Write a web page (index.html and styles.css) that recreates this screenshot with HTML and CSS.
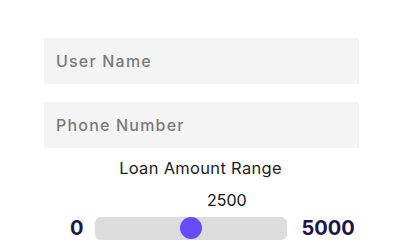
FILE: index.html
```html
<!DOCTYPE html>
<html>
<head>
<meta charset="utf-8">
<link rel="stylesheet" href="styles.css">
</head>
<body>
<form class="form">
  <input class="field" type="text" placeholder="User Name">
  <input class="field" type="text" placeholder="Phone Number">
  <div class="range-block">
    <div class="range-title">Loan Amount Range</div>
    <div class="range-value">2500</div>
    <div class="range-row">
      <span class="range-num">0</span>
      <input class="slider" type="range" min="0" max="5000" value="2500">
      <span class="range-num">5000</span>
    </div>
  </div>
</form>
</body>
</html>
```
FILE: styles.css
```css
* { box-sizing: border-box; }
html, body { margin: 0; padding: 0; background: #ffffff; }
body { font-family: "Inter", "Noto Sans", sans-serif; }
.form {
  width: 315px;
  margin: 0 0 0 44px;
  padding-top: 38px;
  display: flex;
  flex-direction: column;
}
.field {
  display: block;
  width: 315px;
  height: 46px;
  border: none;
  outline: none;
  background: #f4f4f4;
  padding: 0 12px;
  font-family: inherit;
  font-size: 16px;
  font-weight: 500;
  letter-spacing: 1.2px;
  color: #333;
  margin-bottom: 18px;
}
.field::placeholder { color: #7a7a7a; }
.field:last-of-type { margin-bottom: 0; }
.range-block {
  display: flex;
  flex-direction: column;
  margin-top: 10px;
}
.range-title {
  text-align: center;
  font-size: 16.5px;
  letter-spacing: 0.3px;
  color: #222;
  line-height: 20px;
  padding-right: 2px;
}
.range-value {
  font-size: 16px;
  color: #111;
  line-height: 20px;
  margin-top: 12px;
  padding-left: 163px;
}
.range-row {
  display: flex;
  align-items: center;
  margin-top: 6px;
  margin-left: 26px;
}
.range-num {
  font-size: 20px;
  font-weight: 700;
  color: #1b1548;
}
.slider {
  -webkit-appearance: none;
  appearance: none;
  width: 192px;
  height: 23px;
  margin: 0 15px 0 11px;
  background: #dcdcdc;
  border-radius: 6px;
  outline: none;
}
.slider::-webkit-slider-thumb {
  -webkit-appearance: none;
  appearance: none;
  width: 22px;
  height: 22px;
  border-radius: 50%;
  background: #654cff;
  border: none;
}
```
